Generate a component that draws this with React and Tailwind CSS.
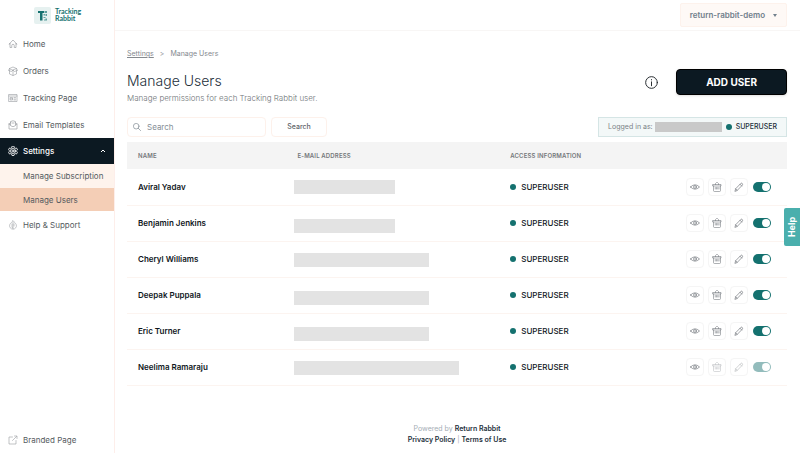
import React from "react";

const users = [
  { name: "Aviral Yadav", bar: "w-[101px]", pad: "pt-px" },
  { name: "Benjamin Jenkins", bar: "w-[101px]", pad: "pt-[5px]" },
  { name: "Cheryl Williams", bar: "w-[135px]", pad: "pt-px" },
  { name: "Deepak Puppala", bar: "w-[135px]", pad: "pt-[5px]" },
  { name: "Eric Turner", bar: "w-[135px]", pad: "pt-[5px]" },
  { name: "Neelima Ramaraju", bar: "w-[165px]", pad: "pt-px", locked: true },
];

function Icon({ children, size = "size-[10px]", box = "0 0 20 20", width = "1.3" }) {
  return (
    <svg viewBox={box} className={`${size} shrink-0`} fill="none" stroke="currentColor" strokeWidth={width} strokeLinejoin="round" strokeLinecap="round" aria-hidden="true">
      {children}
    </svg>
  );
}

const HomeIcon = () => (
  <Icon><path d="M4 9.500 2 10.500 10 2l8 8.500-2-1M4 9.500V17h3.500v-4a2.500 2.500 0 0 1 5 0v4H16V9.500" /></Icon>
);
const OrdersIcon = () => (
  <Icon width="1.2"><path d="M3 8v8l7 3 7-3V8M10 8v11M3 5l7-3 7 3-7 3zM3 5 1 9l6 2 3-3 3 3 6-2-2-4" /></Icon>
);
const PageIcon = () => (
  <Icon width="1.2"><path d="M2 3h16v14H2zM2 6h16M5 9h4v5H5zM12 9h3M12 12h3M12 14h3M5 11.5h4" /></Icon>
);
const MailIcon = () => (
  <Icon><path d="M2 8v10h16V8l-4-3.500M2 8l4-3.500M2 8l6 5h4l6-5M5 10V3q5-3 10 0v7M8 6h4" /></Icon>
);
const GearIcon = () => (
  <Icon width="1.7">
    <path d="m8 1-.6 2.500-2 1.200L3 4 1 7.500 2.800 9.300v1.400L1 12.500 3 16l2.400-.7 2 1.200L8 19h4l.6-2.500 2-1.200 2.400.7 2-3.500-1.800-1.800V9.300L19 7.500 17 4l-2.400.7-2-1.200L12 1z" />
    <circle cx="10" cy="10" r="5" /><circle cx="10" cy="10" r="2" />
  </Icon>
);
const HelpIcon = () => (
  <Icon width="1.1"><path d="M7 5a7 7 0 1 0 6 0M10 3v14M8 3l2-2 2 2M8 8v6q0 2 2 3M12 8v4" /></Icon>
);
const ExternalIcon = () => (
  <Icon width="1.2"><path d="M9 4H2v14h14v-7M9 11l8-8M13 2h5v5" /></Icon>
);
const EyeIcon = () => (
  <Icon width="1.3"><path d="M1 10q9-9 18 0-9 9-18 0z" /><circle cx="10" cy="10" r="2.800" /></Icon>
);
const TrashIcon = () => (
  <Icon width="1.1"><path d="M2 5h16v3H2zM7 5V3l2-2h2l2 2v2M3 8v9q0 2 2 2h10q2 0 2-2V8M6.500 11v3M9 11v3M11.500 11v3M14 11v3" /></Icon>
);
const PencilIcon = () => (
  <Icon width="1.3"><path d="m2 18 1.300-4.500L13.500 3q1.500-1.500 3 0t0 3.500L6.500 16.700zM12 4.500 15.500 8M3.300 13.500l3.200 3.200" /></Icon>
);

function NavItem({ icon, label }) {
  return (
    <a href="#" className="flex h-[27px] items-center gap-[5px] pl-2 text-[8px] text-[#555b60]">
      <span className="text-[#979b9f]">{icon}</span>
      {label}
    </a>
  );
}

function Sidebar() {
  return (
    <aside className="flex w-[115px] shrink-0 flex-col border-r border-[#fdeeea]">
      <div className="flex h-[30px] items-center gap-1 pl-[34px]">
        <svg viewBox="0 0 17 17" className="size-[17px]" aria-hidden="true">
          <rect width="17" height="17" rx="2" fill="#e6f1f0" />
          <path d="M4 4h6v2H8.500v7.500H6V6H4z" fill="#14716f" />
          <path d="M10.500 4h2.500v2h-2.500zM9.500 7h1.500v1.500H9.500zM11.500 7H13v2h-1.500zM9.500 10h2v1h-2zM11.500 11.500H13v2h-3v-1h1.500z" fill="#5da09e" />
        </svg>
        <div className="font-[Lato,sans-serif] text-[7px] leading-[7px] font-bold text-[#14716f]">
          Tracking<br />Rabbit
        </div>
      </div>
      <nav className="flex grow flex-col">
        <NavItem icon={<HomeIcon />} label="Home" />
        <NavItem icon={<OrdersIcon />} label="Orders" />
        <NavItem icon={<PageIcon />} label="Tracking Page" />
        <NavItem icon={<MailIcon />} label="Email Templates" />
        <button type="button" className="flex h-[26px] items-center gap-[5px] bg-[#0c1922] pr-2 pl-2 text-[8px] font-medium text-white">
          <GearIcon />
          Settings
          <svg viewBox="0 0 6 4" className="ml-auto h-1 w-[6px]" fill="none" stroke="currentColor" aria-hidden="true"><path d="m1 3 2-2 2 2" /></svg>
        </button>
        <a href="#" className="flex h-6 items-center bg-[#fef3ec] pl-[23px] text-[8px] text-[#555b60]">Manage Subscription</a>
        <a href="#" aria-current="page" className="flex h-[23px] items-center bg-[#f4ceb6] pl-[23px] text-[8px] text-[#555b60]">Manage Users</a>
        <NavItem icon={<HelpIcon />} label="Help & Support" />
        <div className="mt-auto">
          <NavItem icon={<ExternalIcon />} label="Branded Page" />
        </div>
      </nav>
    </aside>
  );
}

function ActionButton({ label, dim, children }) {
  return (
    <button type="button" aria-label={label} disabled={dim} className={`flex size-[18px] items-center justify-center rounded-sm border border-[#f5f5f5] bg-white ${dim ? "text-[#b9bcbe]" : "text-[#6b7075]"}`}>
      {children}
    </button>
  );
}

function Toggle({ user }) {
  return (
    <label className={`relative flex h-[10px] w-[18px] rounded-full ${user.locked ? "bg-[#93bcbc]" : "bg-[#14716f]"}`}>
      <input type="checkbox" defaultChecked disabled={user.locked} aria-label={`${user.name} active`} className="peer absolute inset-0 size-full appearance-none" />
      <span className="m-px size-2 rounded-full bg-white peer-checked:ml-[9px]" />
    </label>
  );
}

function Role() {
  return (
    <span className="flex items-center gap-[5px] text-[8px] font-medium text-[#10171c]">
      <span className="size-[6px] rounded-full bg-[#14716f]" />
      SUPERUSER
    </span>
  );
}

function UsersTable() {
  return (
    <table className="mt-[5px] w-full table-fixed border-collapse">
      <thead>
        <tr className="h-[27px] bg-[#f4f4f4] text-left text-[6px] text-[#74787b]">
          <th className="w-[24%] pl-[11px] font-semibold tracking-wide">NAME</th>
          <th className="pl-[12px] font-semibold tracking-wide">E-MAIL ADDRESS</th>
          <th className="w-[22%] pl-[7px] font-semibold tracking-wide">ACCESS INFORMATION</th>
          <th className="w-[21%]" aria-label="Actions" />
        </tr>
      </thead>
      <tbody>
        {users.map((user) => (
          <tr key={user.name} className="h-9 border-b border-[#fcf4f0]">
            <td className="pl-[11px] text-[8px] font-semibold text-[#10171c]">{user.name}</td>
            <td className={`pl-[9px] ${user.pad}`}>
              <div className={`h-[14px] bg-[#e3e3e3] ${user.bar}`} />
            </td>
            <td className="pl-[7px]"><Role /></td>
            <td className="pr-4">
              <div className="flex items-center justify-end gap-[5px]">
                <div className="flex gap-1">
                  <ActionButton label={`View ${user.name}`}><EyeIcon /></ActionButton>
                  <ActionButton label={`Delete ${user.name}`} dim={user.locked}><TrashIcon /></ActionButton>
                  <ActionButton label={`Edit ${user.name}`} dim={user.locked}><PencilIcon /></ActionButton>
                </div>
                <Toggle user={user} />
              </div>
            </td>
          </tr>
        ))}
      </tbody>
    </table>
  );
}

export default function App() {
  return (
    <div className="flex min-h-screen bg-white font-[Inter,'Liberation_Sans',sans-serif] leading-3">
      <Sidebar />
      <div className="flex min-w-0 grow flex-col">
        <header className="flex h-[31px] items-center justify-end border-b border-[#f8f6f5] pr-[13px]">
          <button type="button" className="flex h-6 items-center gap-2 rounded-xs border border-[#fdf2ec] bg-[#fef9f6] px-[9px] text-[8px] font-semibold text-[#71808c]">
            return-rabbit-demo
            <svg viewBox="0 0 4 3" className="h-[3px] w-1" fill="currentColor" aria-hidden="true"><path d="M0 0h4L2 3z" /></svg>
          </button>
        </header>
        <main className="flex grow flex-col pr-[13px] pl-3">
          <nav aria-label="Breadcrumb" className="mt-[17px] flex gap-[6px] text-[7px] text-[#858a8f]">
            <a href="#" className="underline">Settings</a>
            <span>&gt;</span>
            <span>Manage Users</span>
          </nav>
          <div className="mt-[9px] flex items-start justify-between">
            <div>
              <h1 className="pt-[2px] text-[14px] leading-5 font-light text-[#24303b]">Manage Users</h1>
              <p className="mt-px text-[8px] font-light text-[#6f7478]">Manage permissions for each Tracking Rabbit user.</p>
            </div>
            <div className="flex items-center gap-[18px]">
              <button type="button" aria-label="Information" className="text-[#24292d]">
                <Icon size="size-[13px]" width="1.5"><circle cx="10" cy="10" r="9" /><path d="M10 9v6M10 5.500v.5" /></Icon>
              </button>
              <button type="button" className="h-[26px] w-[111px] rounded-sm border border-black bg-[#0c1922] text-[10px] font-bold text-white shadow-sm">ADD USER</button>
            </div>
          </div>
          <div className="mt-[13px] flex items-center gap-[5px]">
            <label className="flex h-5 w-[139px] items-center gap-[6px] rounded-sm border border-[#fdf1eb] px-[5px] text-[#858e96]">
              <Icon size="size-2" width="1.8"><circle cx="8" cy="8" r="7" /><path d="m13 13 6 6" /></Icon>
              <input type="text" aria-label="Search users" placeholder="Search" className="w-full min-w-0 text-[8px] outline-none placeholder:text-[#858e96]" />
            </label>
            <button type="button" className="h-5 w-[56px] rounded-sm border border-[#fdf1eb] text-[7px] font-medium text-[#5f6569]">Search</button>
            <div className="ml-auto flex h-5 items-center gap-[2px] border border-[#d5e5e5] bg-[#f3f8f8] px-[9px] text-[7px] text-[#7b8286]">
              Logged in as:
              <span className="mr-[2px] h-[10px] w-[67px] bg-[#c9c9c9]" />
              <span className="flex items-center gap-1 font-medium text-[#24303b]">
                <span className="size-[6px] rounded-full bg-[#14716f]" />
                SUPERUSER
              </span>
            </div>
          </div>
          <UsersTable />
          <footer className="mt-auto pb-2 text-center text-[7px] leading-[11px] text-[#a4adb5]">
            <div>Powered by <a href="#" className="font-semibold text-[#24303b]">Return Rabbit</a></div>
            <div>
              <a href="#" className="font-semibold text-[#24303b]">Privacy Policy</a> | <a href="#" className="font-semibold text-[#24303b]">Terms of Use</a>
            </div>
          </footer>
        </main>
      </div>
      <button type="button" className="fixed top-1/2 right-0 flex h-[38px] w-4 -translate-y-1/2 items-center justify-center rounded-l-xs bg-[#4aafad] text-[9px] font-bold text-white">
        <span className="-rotate-90">Help</span>
      </button>
    </div>
  );
}
